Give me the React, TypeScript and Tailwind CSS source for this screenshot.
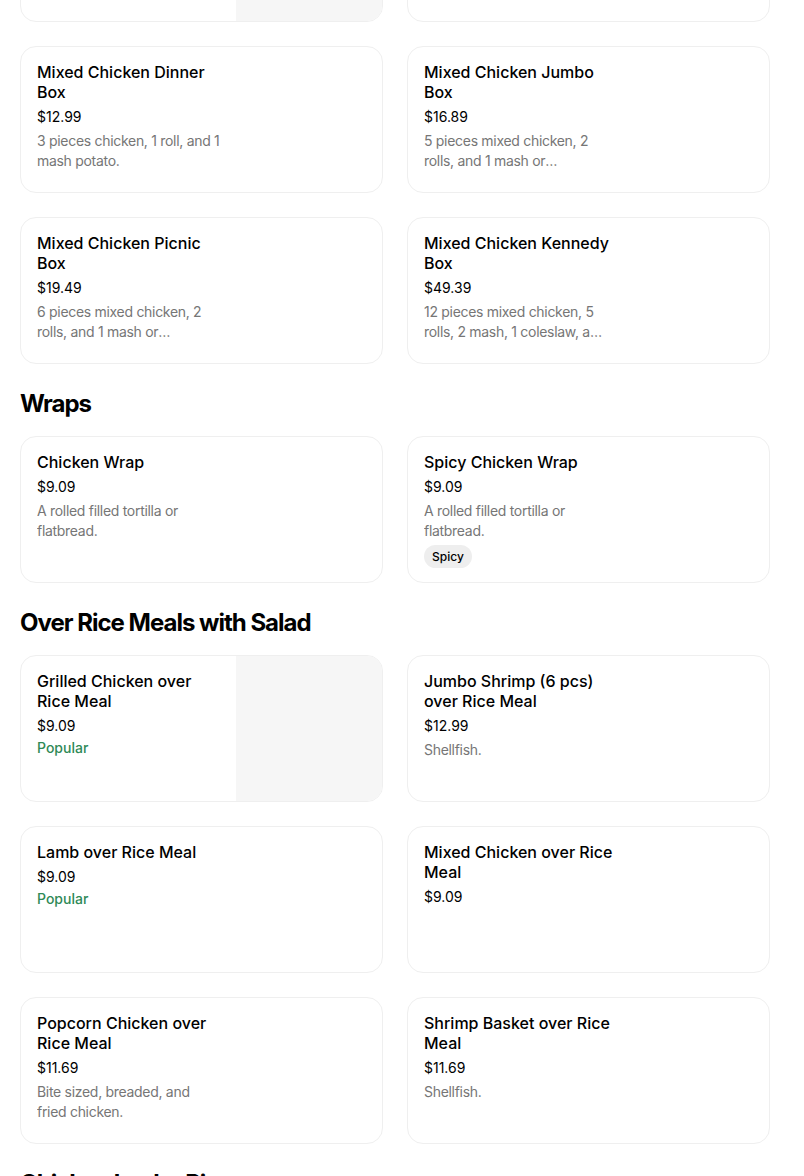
import React from "react";

type Item = {
  name: string;
  price: string;
  description?: string;
  popular?: boolean;
  tag?: string;
  image?: boolean;
};

type Section = {
  title?: string;
  items: Item[];
};

const sections: Section[] = [
  {
    items: [
      {
        name: "Mixed Chicken Family Box",
        price: "$34.99",
        description: "8 pieces mixed chicken, 4 rolls, and 2 sides.",
        image: true,
      },
      {
        name: "Mixed Chicken Snack Box",
        price: "$8.49",
        description: "2 pieces mixed chicken and 1 roll.",
      },
      {
        name: "Mixed Chicken Dinner Box",
        price: "$12.99",
        description: "3 pieces chicken, 1 roll, and 1 mash potato.",
      },
      {
        name: "Mixed Chicken Jumbo Box",
        price: "$16.89",
        description: "5 pieces mixed chicken, 2 rolls, and 1 mash or homemade coleslaw.",
      },
      {
        name: "Mixed Chicken Picnic Box",
        price: "$19.49",
        description: "6 pieces mixed chicken, 2 rolls, and 1 mash or homemade coleslaw.",
      },
      {
        name: "Mixed Chicken Kennedy Box",
        price: "$49.39",
        description: "12 pieces mixed chicken, 5 rolls, 2 mash, 1 coleslaw, and 1 large drink.",
      },
    ],
  },
  {
    title: "Wraps",
    items: [
      {
        name: "Chicken Wrap",
        price: "$9.09",
        description: "A rolled filled tortilla or flatbread.",
      },
      {
        name: "Spicy Chicken Wrap",
        price: "$9.09",
        description: "A rolled filled tortilla or flatbread.",
        tag: "Spicy",
      },
    ],
  },
  {
    title: "Over Rice Meals with Salad",
    items: [
      {
        name: "Grilled Chicken over Rice Meal",
        price: "$9.09",
        popular: true,
        image: true,
      },
      {
        name: "Jumbo Shrimp (6 pcs) over Rice Meal",
        price: "$12.99",
        description: "Shellfish.",
      },
      { name: "Lamb over Rice Meal", price: "$9.09", popular: true },
      { name: "Mixed Chicken over Rice Meal", price: "$9.09" },
      {
        name: "Popcorn Chicken over Rice Meal",
        price: "$11.69",
        description: "Bite sized, breaded, and fried chicken.",
      },
      {
        name: "Shrimp Basket over Rice Meal",
        price: "$11.69",
        description: "Shellfish.",
      },
    ],
  },
  {
    title: "Chicken by the Piece",
    items: [],
  },
];

function MenuCard({ item }: { item: Item }) {
  return (
    <div className="flex h-[147px] overflow-hidden rounded-2xl border border-[#efefef] bg-white">
      <div className="w-[215px] shrink-0 pt-[15px] pl-4">
        <p className="max-w-[189px] text-[16px] leading-5 font-medium text-black">{item.name}</p>
        <p className="mt-[5px] text-[14px] leading-5 text-black">{item.price}</p>
        {item.popular && (
          <p className="mt-[2px] text-[14px] leading-5 font-medium text-[#2f8a57]">Popular</p>
        )}
        {item.description && (
          <p className="mt-1 line-clamp-2 max-w-[184px] text-[14px] leading-5 tracking-[-0.3px] text-[#767676]">
            {item.description}
          </p>
        )}
        {item.tag && (
          <span className="mt-1 inline-flex h-[23px] items-center rounded-full bg-[#eeeeee] px-2 text-[12px] font-medium text-black">
            {item.tag}
          </span>
        )}
      </div>
      <div className="flex-1" />
      {item.image && <div className="w-[146px] shrink-0 bg-[#f6f6f6]" />}
    </div>
  );
}

export default function App() {
  return (
    <div
      className="min-h-screen bg-white"
      style={{ fontFamily: "Inter, 'Liberation Sans', sans-serif" }}
    >
      <div className="-mt-[125px] w-[790px] px-5">
        {sections.map((section, i) => (
          <section key={i}>
            {section.title && (
              <h2 className="mt-[24px] mb-[16px] text-[24px] leading-8 font-bold tracking-[-1px] text-black">
                {section.title}
              </h2>
            )}
            {section.items.length > 0 && (
              <div className="grid grid-cols-2 gap-6">
                {section.items.map((item) => (
                  <MenuCard key={item.name} item={item} />
                ))}
              </div>
            )}
          </section>
        ))}
      </div>
    </div>
  );
}
